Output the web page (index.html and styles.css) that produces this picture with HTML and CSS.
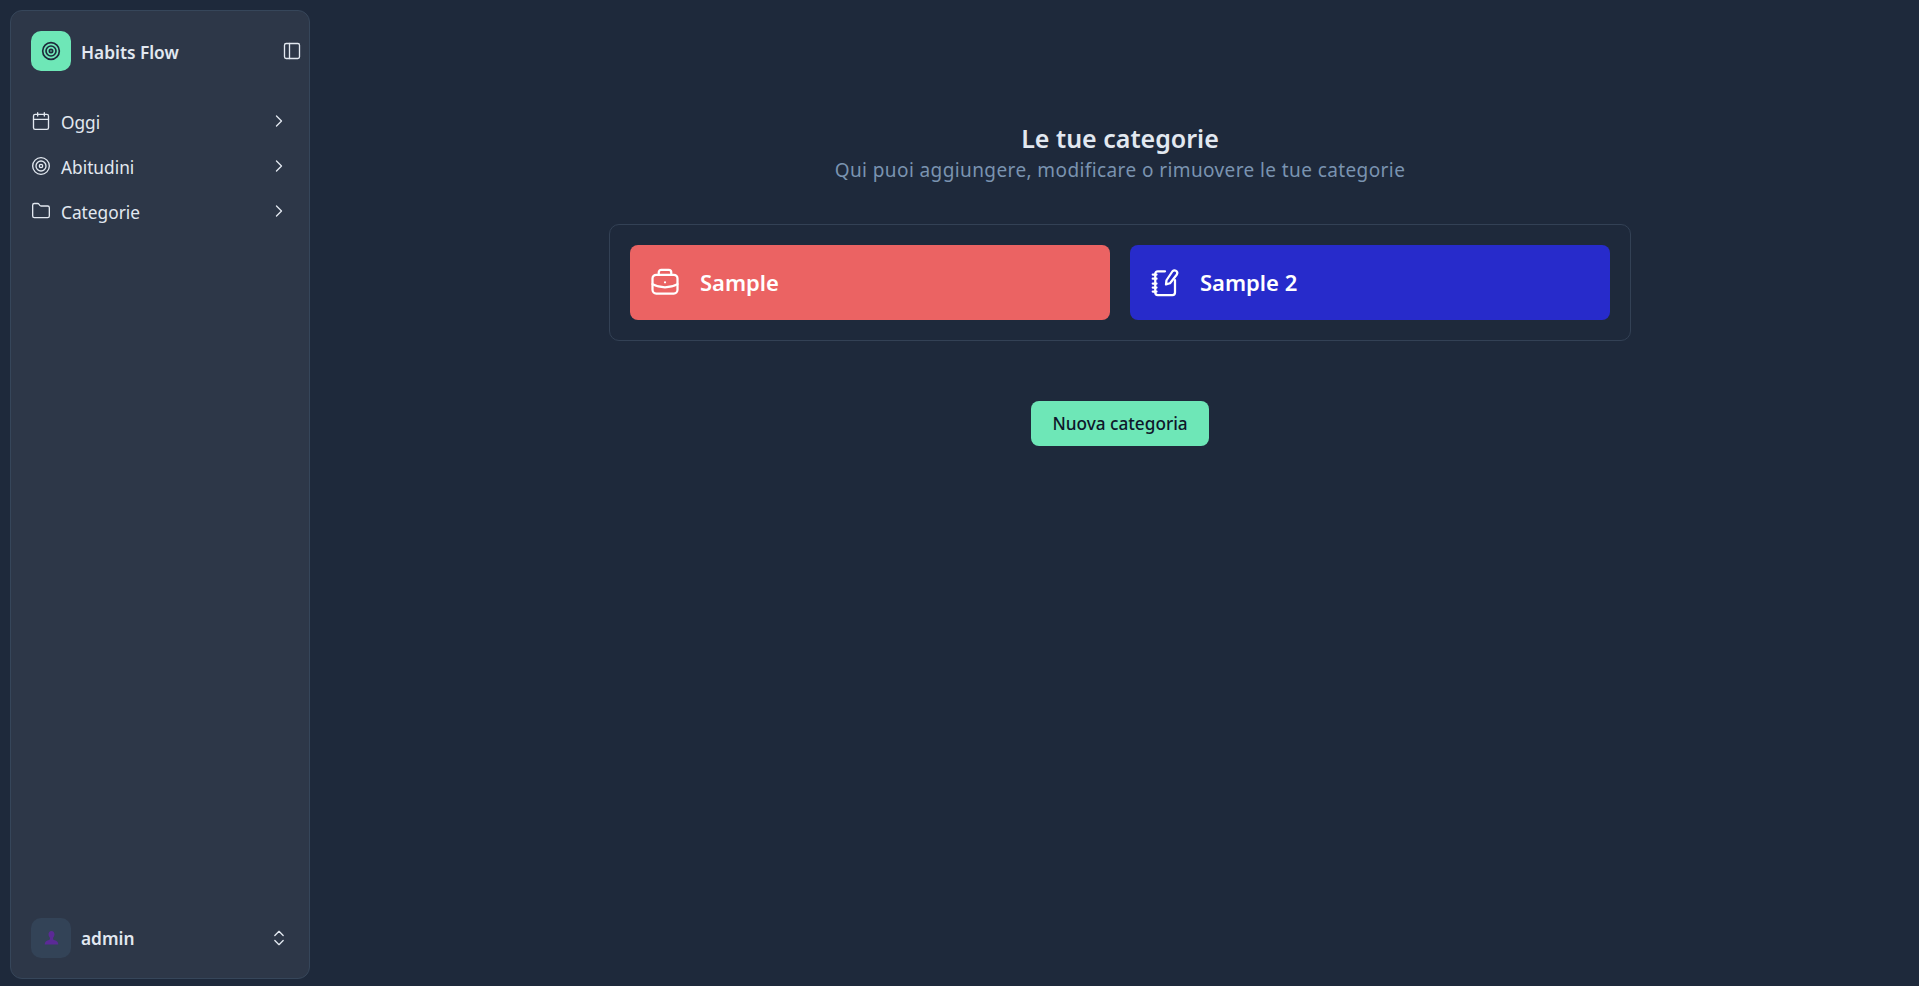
FILE: index.html
```html
<!DOCTYPE html>
<html lang="it">

<head>
    <meta charset="UTF-8">
    <meta name="viewport" content="width=device-width, initial-scale=1.0">
    <title>Habits Flow - Categorie</title>
    <link rel="stylesheet" href="styles.css">
</head>

<body>
    <div class="app">
        <aside class="sidebar">
            <div class="brand">
                <div class="brand-logo">
                    <svg class="icon-logo" viewBox="0 0 24 24">
                        <circle cx="12" cy="12" r="10" />
                        <circle cx="12" cy="12" r="6" />
                        <circle cx="12" cy="12" r="2" />
                    </svg>
                </div>
                <span class="brand-name">Habits Flow</span>
                <svg class="icon icon-panel" viewBox="0 0 24 24">
                    <rect x="3" y="3" width="18" height="18" rx="2" />
                    <path d="M9 3v18" />
                </svg>
            </div>

            <nav class="nav">
                <a class="nav-item" href="#">
                    <svg class="icon" viewBox="0 0 24 24">
                        <path d="M8 2v4" />
                        <path d="M16 2v4" />
                        <rect x="3" y="4" width="18" height="18" rx="2" />
                        <path d="M3 10h18" />
                    </svg>
                    <span class="nav-label">Oggi</span>
                    <svg class="icon-small" viewBox="0 0 24 24">
                        <path d="m9 18 6-6-6-6" />
                    </svg>
                </a>
                <a class="nav-item" href="#">
                    <svg class="icon" viewBox="0 0 24 24">
                        <circle cx="12" cy="12" r="10" />
                        <circle cx="12" cy="12" r="6" />
                        <circle cx="12" cy="12" r="2" />
                    </svg>
                    <span class="nav-label">Abitudini</span>
                    <svg class="icon-small" viewBox="0 0 24 24">
                        <path d="m9 18 6-6-6-6" />
                    </svg>
                </a>
                <a class="nav-item" href="#">
                    <svg class="icon" viewBox="0 0 24 24">
                        <path d="M20 20a2 2 0 0 0 2-2V8a2 2 0 0 0-2-2h-7.900a2 2 0 0 1-1.690-.9L9.600 3.900A2 2 0 0 0 7.930 3H4a2 2 0 0 0-2 2v13a2 2 0 0 0 2 2Z" />
                    </svg>
                    <span class="nav-label">Categorie</span>
                    <svg class="icon-small" viewBox="0 0 24 24">
                        <path d="m9 18 6-6-6-6" />
                    </svg>
                </a>
            </nav>

            <div class="user">
                <div class="user-avatar">
                    <svg class="icon-user" viewBox="0 0 16 16">
                        <path d="M8 1c1.800 0 2.800 1.300 2.800 3.100 0 1.400-.6 2.600-1.300 3.300v1.300c0 .7 2.900 1 4 2.300.6.700.9 1.700.9 2.600H1.600c0-.9.300-1.900.9-2.600 1.100-1.300 4-1.600 4-2.300V7.400c-.7-.7-1.300-1.900-1.300-3.300C5.200 2.300 6.200 1 8 1Z" />
                    </svg>
                </div>
                <span class="user-name">admin</span>
                <svg class="icon-small" viewBox="0 0 24 24">
                    <path d="m7 15 5 5 5-5" />
                    <path d="m7 9 5-5 5 5" />
                </svg>
            </div>
        </aside>

        <main class="main">
            <h1 class="title">Le tue categorie</h1>
            <p class="subtitle">Qui puoi aggiungere, modificare o rimuovere le tue categorie</p>

            <section class="category-box">
                <a class="category category-red" href="#">
                    <svg class="icon-category icon-briefcase" viewBox="0 0 24 24">
                        <path d="M7 7V5a2 2 0 0 1 2-2h6a2 2 0 0 1 2 2v2" />
                        <rect x="2" y="7" width="20" height="15" rx="3" />
                        <path d="M2 14.500c3 1.700 6 2.500 10 2.500s7-.8 10-2.500" />
                        <path d="M12 13v.01" />
                    </svg>
                    <span class="category-name">Sample</span>
                </a>
                <a class="category category-blue" href="#">
                    <svg class="icon-category" viewBox="0 0 24 24">
                        <path d="M12 3.400H6.200a2 2 0 0 0-2 2v15a2 2 0 0 0 2 2H18a2 2 0 0 0 2-2v-9.900" />
                        <path d="M2.200 6h3" />
                        <path d="M2.200 9.300h3" />
                        <path d="M2.200 13.200h3" />
                        <path d="M2.200 16.400h3" />
                        <path d="M2.200 19.600h3" />
                        <path d="M18 3.400a2.200 2.200 0 0 1 3.500 2.600L16 13l-3.200.9.400-3.300Z" />
                    </svg>
                    <span class="category-name">Sample 2</span>
                </a>
            </section>

            <button class="btn-new" type="button">Nuova categoria</button>
        </main>
    </div>
</body>

</html>
```

FILE: styles.css
```css
* {
    margin: 0;
    padding: 0;
    box-sizing: border-box;
}

body {
    font-family: 'Noto Sans', 'Open Sans', Arial, sans-serif;
    background: #1e293b;
    color: #e2e8f0;
    height: 100vh;
    overflow: hidden;
}

a {
    color: inherit;
    text-decoration: none;
}

svg {
    fill: none;
    stroke: currentColor;
    stroke-width: 2;
    stroke-linecap: round;
    stroke-linejoin: round;
    flex-shrink: 0;
}

.app {
    display: flex;
    height: 100%;
}

/* sidebar */

.sidebar {
    width: 300px;
    margin: 10px 0 7px 10px;
    padding: 20px 9px 20px 20px;
    background: #2d3748;
    border: 1px solid #36465a;
    border-radius: 12px;
    display: flex;
    flex-direction: column;
    flex-shrink: 0;
}

.brand {
    display: flex;
    align-items: center;
    height: 40px;
}

.brand-logo {
    width: 40px;
    height: 40px;
    border-radius: 10px;
    background: #6ee7b7;
    color: #1e293b;
    display: flex;
    align-items: center;
    justify-content: center;
    margin-right: 10px;
}

.icon-logo {
    width: 20px;
    height: 20px;
}

.brand-name {
    font-size: 17.300px;
    font-weight: 600;
    flex: 1;
    padding-top: 2px;
}

.icon {
    width: 20px;
    height: 20px;
    stroke-width: 1.6;
}

.icon-panel {
    margin: 0 -2px 0 0;
}

.icon-small {
    width: 20px;
    height: 20px;
    stroke-width: 1.600;
}

.nav {
    margin-top: 33px;
    padding-right: 11px;
    display: flex;
    flex-direction: column;
    gap: 9px;
}

.nav-item {
    height: 36px;
    display: flex;
    align-items: center;
    font-size: 17.300px;
}

.nav-item svg {
    margin-top: -3px;
}

.nav-label {
    flex: 1;
    margin-left: 10px;
}

.user {
    margin-top: auto;
    padding-right: 11px;
    display: flex;
    align-items: center;
    height: 40px;
}

.user-avatar {
    width: 40px;
    height: 40px;
    border-radius: 10px;
    background: #334357;
    display: flex;
    align-items: center;
    justify-content: center;
    margin-right: 10px;
}

.icon-user {
    width: 17px;
    height: 17px;
    fill: #5b2a96;
    stroke: none;
}

.user-name {
    flex: 1;
    font-size: 17.300px;
    font-weight: 600;
}

/* main */

.main {
    flex: 1;
    padding: 122px 0 0 11px;
    display: flex;
    flex-direction: column;
    align-items: center;
}

.title {
    font-size: 25px;
    line-height: 32px;
    font-weight: 600;
}

.subtitle {
    margin-top: 1px;
    font-size: 19px;
    line-height: 30px;
    letter-spacing: .4px;
    color: #7a93b0;
}

.category-box {
    width: 1022px;
    margin-top: 39px;
    padding: 20px;
    border: 1px solid #334155;
    border-radius: 10px;
    display: grid;
    grid-template-columns: 1fr 1fr;
    gap: 20px;
}

.category {
    height: 75px;
    padding: 0 20px;
    border-radius: 8px;
    display: flex;
    align-items: center;
    gap: 20px;
    color: #fff;
    font-size: 22px;
    font-weight: 600;
}

.category-name {
    padding-bottom: 2px;
}

.category-red {
    background: #eb6363;
}

.category-blue {
    background: #272bcb;
}

.icon-category {
    width: 30px;
    height: 30px;
    stroke-width: 1.800;
    margin-top: -2px;
}

.icon-briefcase {
    margin-top: -4px;
}

.btn-new {
    margin-top: 60px;
    width: 178px;
    height: 45px;
    border: none;
    border-radius: 8px;
    background: #6ee7b7;
    color: #0f172a;
    font-family: inherit;
    font-size: 17.200px;
    font-weight: 500;
}
```
